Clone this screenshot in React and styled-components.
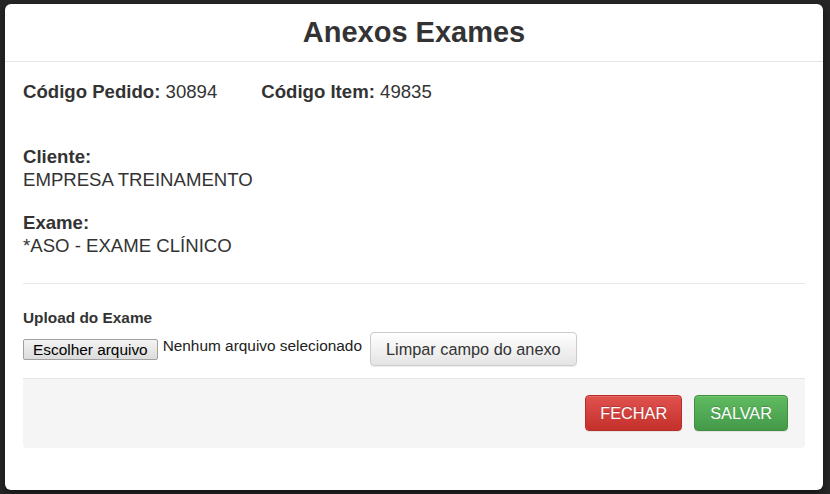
import React from "react";
import styled, { createGlobalStyle } from "styled-components";

const Global = createGlobalStyle`
  html, body { margin: 0; padding: 0; background: #262626; }
  body { font-family: "Liberation Sans", Arial, sans-serif; color: #333; }
  * { box-sizing: border-box; }
`;

const Page = styled.div`
  width: 830px;
  height: 494px;
  padding: 4px 7px 4px 5px;
  background: #262626;
  overflow: hidden;
`;

const Modal = styled.div`
  width: 818px;
  height: 486px;
  background: #fff;
  border-radius: 6px;
  display: flex;
  flex-direction: column;
  box-shadow: 0 3px 9px rgba(0, 0, 0, 0.5);
`;

const Header = styled.div`
  padding: 12px;
  border-bottom: 1px solid #e5e5e5;
  text-align: center;
`;

const Title = styled.h4`
  margin: 0;
  font-size: 29px;
  line-height: 33px;
  font-weight: bold;
  color: #333;
`;

const Body = styled.div`
  padding: 18px 18px 0 18px;
  font-size: 18.6px;
  line-height: 23px;
`;

const CodeRow = styled.div`
  display: flex;
  gap: 44px;
`;

const Label = styled.b`
  font-weight: bold;
`;

const Field = styled.div`
  margin-top: ${(p) => p.$top}px;
`;

const Divider = styled.hr`
  margin: 26px 0 0 0;
  border: 0;
  border-top: 1px solid #e8e8e8;
`;

const UploadLabel = styled.label`
  display: block;
  margin-top: 24px;
  font-size: 15.4px;
  line-height: 20px;
  font-weight: bold;
`;

const FileRow = styled.div`
  margin-top: 4px;
  display: flex;
  align-items: center;
  height: 34px;
`;

const FileButton = styled.span`
  display: inline-block;
  height: 21px;
  padding: 0 9px;
  font-size: 15.4px;
  line-height: 19px;
  color: #000;
  background: linear-gradient(#f3f3f3, #dcdcdc);
  border: 1px solid #a0a0a0;
  border-radius: 2px;
`;

const FileText = styled.span`
  font-size: 15.4px;
  color: #222;
  margin: 0 8px 0 5px;
  position: relative;
  top: -4px;
`;

const ClearButton = styled.button`
  height: 34px;
  padding: 0 15px;
  font-family: "Liberation Sans", Arial, sans-serif;
  font-size: 16.3px;
  color: #333;
  background: linear-gradient(#ffffff, #e4e4e4);
  border: 1px solid #cccccc;
  border-radius: 4px;
  box-shadow: inset 0 1px 0 rgba(255, 255, 255, 0.15), 0 1px 1px rgba(0, 0, 0, 0.08);
`;

const Footer = styled.div`
  margin-top: 12px;
  padding: 16px 17px 17px;
  height: 70px;
  background: #f5f5f5;
  border-top: 1px solid #e5e5e5;
  border-radius: 0 0 4px 4px;
  display: flex;
  justify-content: flex-end;
  gap: 12px;
`;

const ActionButton = styled.button`
  height: 36px;
  padding: 0 ${(p) => p.$pad}px;
  font-family: "Liberation Sans", Arial, sans-serif;
  font-size: 16.3px;
  color: #fff;
  text-shadow: 0 -1px 0 rgba(0, 0, 0, 0.2);
  border-radius: 4px;
  border: 1px solid ${(p) => (p.$variant === "danger" ? "#b92c28" : "#3e8f3e")};
  background: ${(p) =>
    p.$variant === "danger"
      ? "linear-gradient(#e0524e, #c4302c)"
      : "linear-gradient(#60bb60, #44994a)"};
  box-shadow: inset 0 1px 0 rgba(255, 255, 255, 0.15), 0 1px 1px rgba(0, 0, 0, 0.075);
`;

export default function App() {
  return (
    <>
      <Global />
      <Page>
        <Modal>
          <Header>
            <Title>Anexos Exames</Title>
          </Header>
          <Body>
            <CodeRow>
              <span>
                <Label>Código Pedido:</Label> 30894
              </span>
              <span>
                <Label>Código Item:</Label> 49835
              </span>
            </CodeRow>
            <Field $top={42}>
              <Label>Cliente:</Label>
              <div>EMPRESA TREINAMENTO</div>
            </Field>
            <Field $top={20}>
              <Label>Exame:</Label>
              <div>*ASO - EXAME CLÍNICO</div>
            </Field>
            <Divider />
            <UploadLabel>Upload do Exame</UploadLabel>
            <FileRow>
              <FileButton>Escolher arquivo</FileButton>
              <FileText>Nenhum arquivo selecionado</FileText>
              <ClearButton>Limpar campo do anexo</ClearButton>
            </FileRow>
            <Footer>
              <ActionButton $variant="danger" $pad={14}>FECHAR</ActionButton>
              <ActionButton $variant="success" $pad={15}>SALVAR</ActionButton>
            </Footer>
          </Body>
        </Modal>
      </Page>
    </>
  );
}
